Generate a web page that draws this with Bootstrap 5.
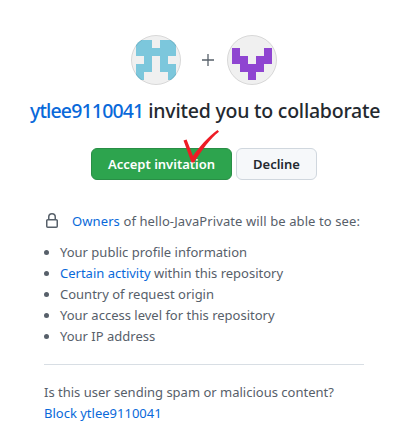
<!doctype html>
<html lang="en"><head><meta charset="utf-8">
<link rel="stylesheet" href="https://cdn.jsdelivr.net/npm/bootstrap@5.3.0/dist/css/bootstrap.min.css">
<style>
html,body{height:442px;overflow:hidden;background:#fff}
body{font-family:"Noto Sans","Open Sans",sans-serif;color:#24292f;font-size:14px}
.inv-wrap{width:320px;margin-left:44px}
.ava-row{height:50px;margin-top:35px}
.ava-pic{width:50px;height:50px;display:block}
.plus-sign{width:46px;color:#57606a;padding-left:8px}
.inv-title{font-size:19.5px;font-weight:400;line-height:30px;margin:11px 0 0 -14px;width:348px;color:#24292f;letter-spacing:-.22px;white-space:nowrap}
.inv-title a{color:#0969da;text-decoration:none;font-weight:500;letter-spacing:-.84px}
.inv-title b{font-weight:500}
.btn-acc,.btn-dec{height:32px;font-size:13px;font-weight:600;padding:0;border-radius:6px;line-height:30px;white-space:nowrap}
.btn-acc{background:#2da44e;border:1px solid #298e46;color:#fff;width:141px}
.btn-dec{background:#f6f8fa;border:1px solid #d0d7de;color:#24292f;width:81px;margin-left:4px}
.btn-row{margin-top:22px;margin-left:47px}
.perm-head{margin-top:31px;line-height:20px;font-size:13px;color:#57606a;white-space:nowrap;letter-spacing:.1px}
.perm-head a,.perm-list a,.block-link{color:#0969da;text-decoration:none}
.lock-ic{width:16px;height:16px;margin-right:12px}
.perm-list{margin:11px 0 0;padding-left:16px;font-size:13px;line-height:21px;color:#57606a;white-space:nowrap}
.perm-list li::marker{color:#57606a}
.rule-line{height:1px;background:#d8dee4;margin:17px 0 0}
.foot-txt{margin-top:17px;font-size:13px;line-height:21px;color:#57606a;white-space:nowrap}
.check-mark{position:absolute;left:183px;top:130px;width:37px;height:33px}
</style></head><body>
<div class="inv-wrap">
 <div class="ava-row d-flex justify-content-center align-items-center">
  <svg class="ava-pic" viewBox="0 0 50 50"><defs><clipPath id="ava-clip"><circle cx="25" cy="25" r="25"/></clipPath></defs>
   <circle cx="25" cy="25" r="25" fill="#f0f0f0"/>
   <g fill="#7cc7dc" clip-path="url(#ava-clip)">
    <rect x="5" y="5" width="16" height="8"/><rect x="29" y="5" width="16" height="8"/>
    <rect x="5" y="13" width="40" height="8"/>
    <rect x="13" y="21" width="8" height="8"/><rect x="29" y="21" width="8" height="8"/>
    <rect x="5" y="29" width="16" height="8"/><rect x="29" y="29" width="16" height="8"/>
    <rect x="5" y="37" width="8" height="8"/><rect x="37" y="37" width="8" height="8"/>
   </g>
   <circle cx="25" cy="25" r="24.5" fill="none" stroke="#000" stroke-opacity=".1"/>
  </svg>
  <div class="plus-sign text-center"><svg width="12" height="12" viewBox="0 0 12 12" class="d-block mx-auto"><path d="M6 0v12M0 6h12" stroke="#57606a" stroke-width="1.3" fill="none"/></svg></div>
  <svg class="ava-pic" viewBox="0 0 50 50"><circle cx="25" cy="25" r="25" fill="#f0f0f0"/>
   <g fill="#8f45d1">
    <rect x="5" y="13" width="8" height="8"/><rect x="37" y="13" width="8" height="8"/>
    <rect x="5" y="21" width="16" height="8"/><rect x="29" y="21" width="16" height="8"/>
    <rect x="13" y="29" width="24" height="8"/>
    <rect x="21" y="37" width="8" height="8"/>
   </g>
   <circle cx="25" cy="25" r="24.5" fill="none" stroke="#000" stroke-opacity=".1"/>
  </svg>
 </div>
 <h1 class="inv-title text-center"><a href="#">ytlee9110041</a> <b>invited you to collaborate</b></h1>
 <div class="btn-row d-flex">
  <button class="btn btn-acc">Accept invitation</button>
  <button class="btn btn-dec">Decline</button>
 </div>
 <div class="perm-head d-flex align-items-center">
  <svg class="lock-ic" viewBox="0 0 16 16"><path fill="#57606a" fill-rule="evenodd" d="M4 4a4 4 0 0 1 8 0v2h.25c.966 0 1.75.784 1.75 1.75v5.5A1.75 1.75 0 0 1 12.25 15h-8.5A1.75 1.75 0 0 1 2 13.25v-5.5C2 6.784 2.784 6 3.75 6H4Zm6.5 2V4a2.5 2.5 0 1 0-5 0v2Zm-6.75 1.5a.25.25 0 0 0-.25.25v5.5c0 .138.112.25.25.25h8.5a.25.25 0 0 0 .25-.25v-5.5a.25.25 0 0 0-.25-.25Z"/></svg>
  <span><a href="#">Owners</a> of hello-JavaPrivate will be able to see:</span>
 </div>
 <ul class="perm-list">
  <li>Your public profile information</li>
  <li><a href="#">Certain activity</a> within this repository</li>
  <li>Country of request origin</li>
  <li>Your access level for this repository</li>
  <li>Your IP address</li>
 </ul>
 <div class="rule-line"></div>
 <div class="foot-txt">Is this user sending spam or malicious content?<br><a class="block-link" href="#">Block ytlee9110041</a></div>
</div>
<svg class="check-mark" viewBox="0 0 37 33"><path fill="#ee1c25" d="M.5 10.5 3.6 9.5 10 26C16 17 25 7 34.5 0L36 1.8C27 9 19 20 11 32.5L8.5 32.5Z"/></svg>
<script src="https://cdn.jsdelivr.net/npm/bootstrap@5.3.0/dist/js/bootstrap.bundle.min.js"></script>
</body></html>
